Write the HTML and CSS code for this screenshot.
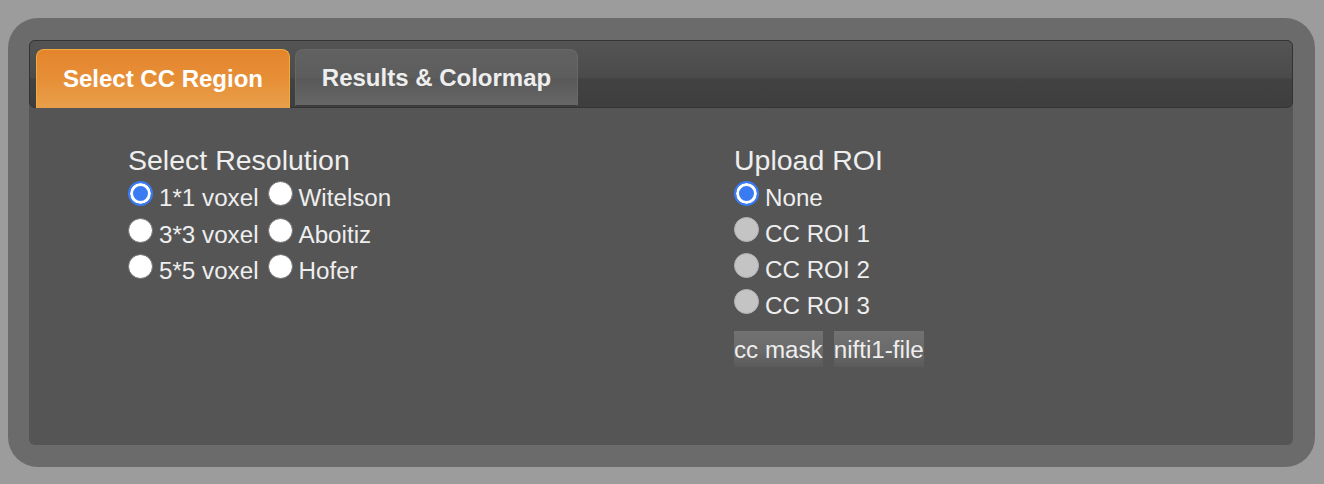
FILE: index.html
```html
<!DOCTYPE html>
<html>
<head>
<meta charset="utf-8">
<title>CC Region</title>
<link rel="stylesheet" href="styles.css">
</head>
<body>
<div class="frame">
  <div class="widget">
    <div class="tabbar">
      <div class="tab tab-active">Select CC Region</div>
      <div class="tab tab-results">Results &amp; Colormap</div>
    </div>
    <div class="panel">
      <div class="col col-res">
        <div class="heading">Select Resolution</div>
        <div class="opts">
          <label class="opt"><input type="radio" name="res" checked>1*1 voxel</label>
          <label class="opt"><input type="radio" name="res">Witelson</label>
          <label class="opt"><input type="radio" name="res">3*3 voxel</label>
          <label class="opt"><input type="radio" name="res">Aboitiz</label>
          <label class="opt"><input type="radio" name="res">5*5 voxel</label>
          <label class="opt"><input type="radio" name="res">Hofer</label>
        </div>
      </div>
      <div class="col col-roi">
        <div class="heading">Upload ROI</div>
        <div class="roi-list">
          <label class="opt"><input type="radio" name="roi" checked>None</label>
          <label class="opt"><input type="radio" name="roi" disabled>CC ROI 1</label>
          <label class="opt"><input type="radio" name="roi" disabled>CC ROI 2</label>
          <label class="opt"><input type="radio" name="roi" disabled>CC ROI 3</label>
        </div>
        <div class="btns">
          <button class="btn">cc mask</button>
          <button class="btn">nifti1-file</button>
        </div>
      </div>
    </div>
  </div>
</div>
</body>
</html>
```
FILE: styles.css
```css
html, body {
  margin: 0;
  padding: 0;
  background: #9c9c9c;
  font-family: "Liberation Sans", Arial, Helvetica, sans-serif;
  color: #eeeeee;
}

.frame {
  box-sizing: border-box;
  margin: 18px 9px 0 8px;
  height: 449px;
  padding: 22px 22px 22px 21px;
  background: #6b6b6b;
  border-radius: 30px;
}

.widget {
  height: 100%;
  background: #555555;
  border-radius: 6px;
  display: flex;
  flex-direction: column;
}

.tabbar {
  display: flex;
  align-items: flex-end;
  gap: 5px;
  padding: 8px 6px 1px;
  border: 1px solid #333333;
  border-radius: 6px;
  background: linear-gradient(#545454 0%, #4b4b4b 55%, #424242 58%, #3e3e3e 100%);
}

.tab {
  box-sizing: border-box;
  height: 57px;
  line-height: 55px;
  font-size: 24px;
  font-weight: bold;
  text-align: center;
  white-space: nowrap;
  border-radius: 8px 8px 0 0;
}

.tab-active {
  width: 254px;
  height: 59px;
  line-height: 57px;
  margin-bottom: -2px;
  color: #ffffff;
  border: 1px solid #f2ac3c;
  border-bottom: none;
  background: linear-gradient(#e4852d 0%, #e68f37 50%, #e99f4b 100%);
}

.tab-results {
  width: 283px;
  color: #eeeeee;
  border: 1px solid #686868;
  border-bottom-color: #3a3a3a;
  background: linear-gradient(#616161 0%, #5d5d5d 50%, #585858 52%, #676767 100%);
}

.panel {
  flex: 1;
  display: grid;
  grid-template-columns: 606px auto;
  align-content: start;
  padding: 36px 0 0 99px;
}

.heading {
  font-size: 28.5px;
  line-height: 32px;
  margin: 0 0 4px 0;
  white-space: nowrap;
}

.opts {
  display: grid;
  grid-template-columns: auto auto;
  justify-content: start;
  column-gap: 9px;
  font-size: 24.2px;
  line-height: 36.5px;
}

.roi-list {
  display: flex;
  flex-direction: column;
  font-size: 24.2px;
  line-height: 36px;
}

.opt {
  display: block;
  white-space: nowrap;
}

.opt input {
  -webkit-appearance: none;
  appearance: none;
  box-sizing: border-box;
  width: 25px;
  height: 25px;
  margin: 0 6px 0 0;
  vertical-align: baseline;
  border-radius: 50%;
  border: 1px solid #6f6f6f;
  background: #ffffff;
}

.opt input:checked {
  border: 2px solid #3a7af3;
  background: #3a7af3;
  box-shadow: inset 0 0 0 3px #ffffff;
}

.opt input:disabled {
  border: 1px solid #b4b4b4;
  background: #c4c4c4;
}

.btns {
  display: flex;
  gap: 11px;
  margin-top: 7px;
}

.btn {
  height: 36px;
  padding: 0;
  margin: 0;
  border: none;
  font-family: inherit;
  font-size: 24.2px;
  line-height: 33px;
  color: #eeeeee;
  background: linear-gradient(#727272 0%, #6a6a6a 55%, #5a5a5a 100%);
}
```
